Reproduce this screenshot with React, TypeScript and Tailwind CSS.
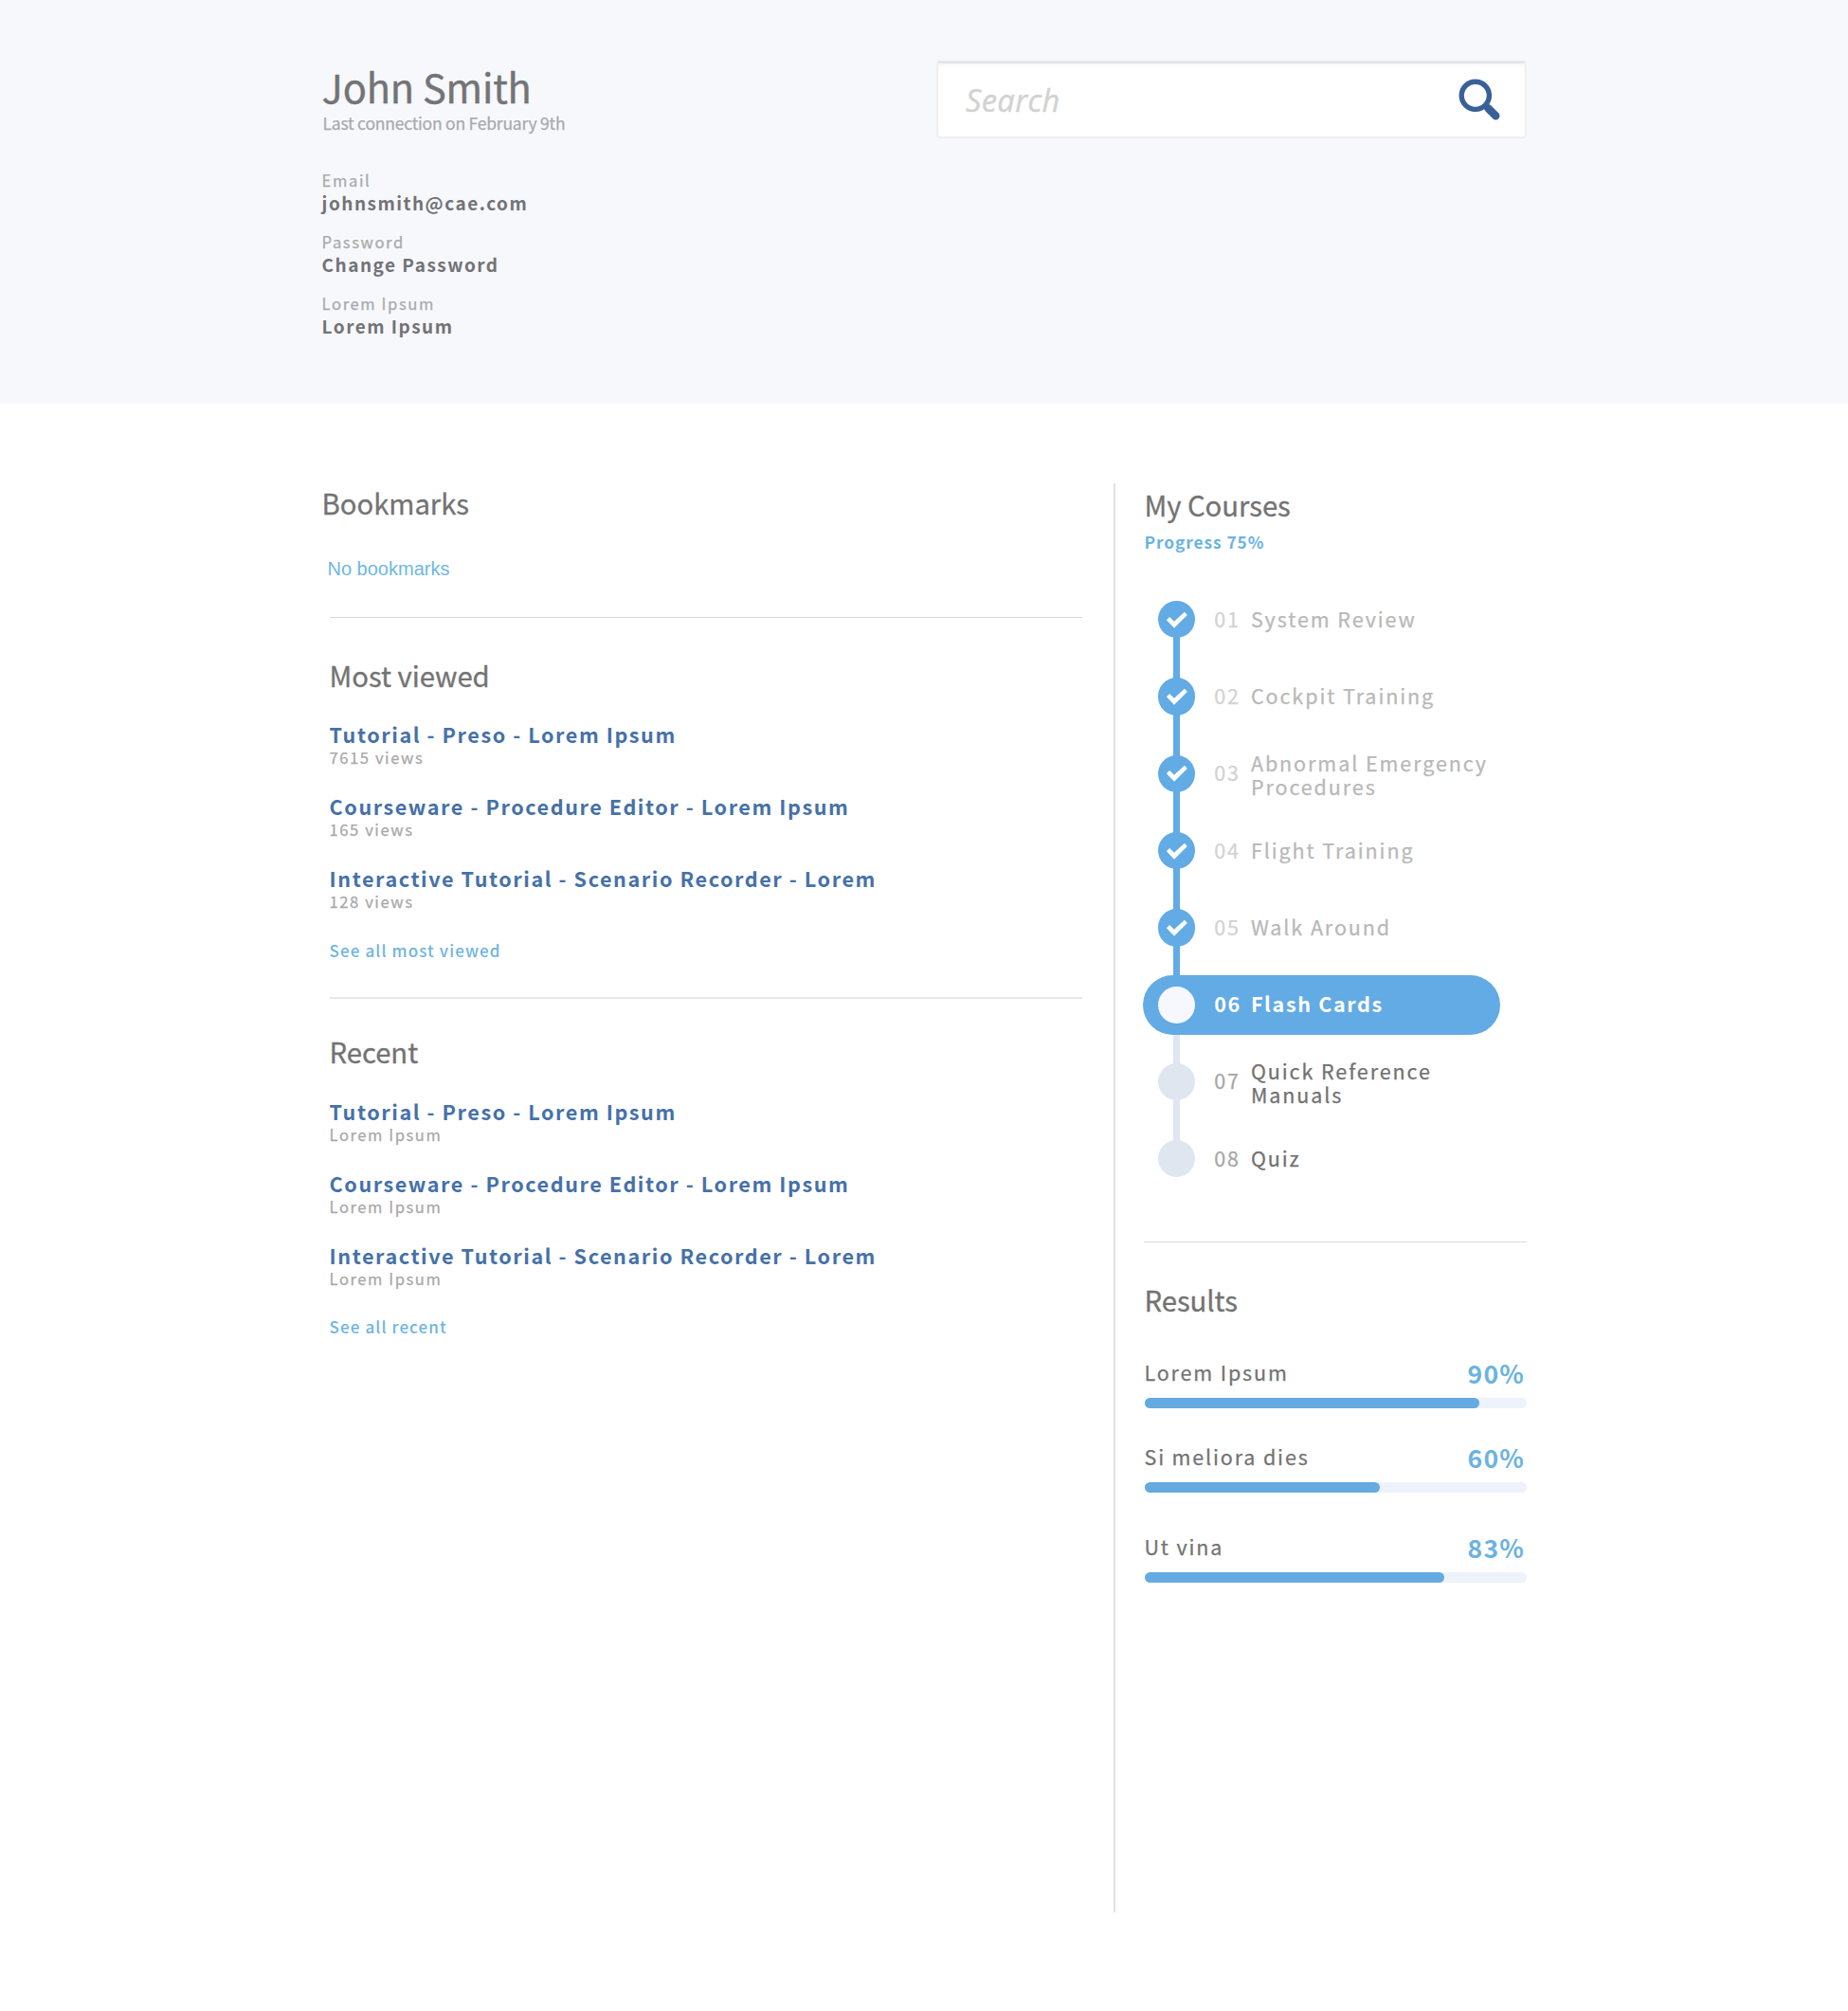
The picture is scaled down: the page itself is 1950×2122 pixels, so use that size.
import React from "react";

type Step = { no: string; lines: string[]; state: "done" | "current" | "todo" };

const details = [
  { label: "Email", value: "johnsmith@cae.com" },
  { label: "Password", value: "Change Password" },
  { label: "Lorem Ipsum", value: "Lorem Ipsum" },
];

const mostViewed = [
  { title: "Tutorial - Preso - Lorem Ipsum", sub: "7615 views" },
  { title: "Courseware - Procedure Editor - Lorem Ipsum", sub: "165 views" },
  { title: "Interactive Tutorial - Scenario Recorder - Lorem", sub: "128 views" },
];

const recent = mostViewed.map((m) => ({ title: m.title, sub: "Lorem Ipsum" }));

const steps: Step[] = [
  { no: "01", lines: ["System Review"], state: "done" },
  { no: "02", lines: ["Cockpit Training"], state: "done" },
  { no: "03", lines: ["Abnormal Emergency", "Procedures"], state: "done" },
  { no: "04", lines: ["Flight Training"], state: "done" },
  { no: "05", lines: ["Walk Around"], state: "done" },
  { no: "06", lines: ["Flash Cards"], state: "current" },
  { no: "07", lines: ["Quick Reference", "Manuals"], state: "todo" },
  { no: "08", lines: ["Quiz"], state: "todo" },
];

const results = [
  { label: "Lorem Ipsum", pct: "90%", fill: 87.6, gap: "mt-[42px]" },
  { label: "Si meliora dies", pct: "60%", fill: 61.5, gap: "mt-[33.5px]" },
  { label: "Ut vina", pct: "83%", fill: 78.3, gap: "mt-[39.5px]" },
];

function Heading({ children }: { children: React.ReactNode }) {
  return (
    <h2 className="text-[29.3px] leading-[36px] tracking-[-0.05px] text-[#737373] [-webkit-text-stroke:0.3px]">
      {children}
    </h2>
  );
}

function LinkList({ items }: { items: { title: string; sub: string }[] }) {
  return (
    <ul className="flex flex-col gap-7">
      {items.map((item) => (
        <li key={item.title} className="whitespace-nowrap">
          <div className="text-[21.6px] leading-[26px] font-bold tracking-[1.57px] text-[#4671a8]">{item.title}</div>
          <div className="text-[16.6px] leading-[22px] tracking-[1.55px] text-[#a8a8a8] [-webkit-text-stroke:0.25px]">
            {item.sub}
          </div>
        </li>
      ))}
    </ul>
  );
}

function SeeAll({ children }: { children: React.ReactNode }) {
  return (
    <a className="block text-[17px] leading-[22px] font-medium tracking-[1.1px] text-[#70b5e0]">{children}</a>
  );
}

function CheckMark() {
  return (
    <svg viewBox="-20 -20 40 40" className="size-10" fill="#fff">
      <polygon points="-11,0.3 -7.7,-3 -2.8,1.8 8.3,-8.4 11.3,-5.1 -2.7,9" />
    </svg>
  );
}

function Marker({ state, first, last }: { state: Step["state"]; first: boolean; last: boolean }) {
  const above = first || state === "current" ? "bg-transparent" : state === "todo" ? "bg-[#dfe6f0]" : "bg-[#62abe5]";
  const below = last || state === "current" ? "bg-transparent" : state === "done" ? "bg-[#62abe5]" : "bg-[#dfe6f0]";
  const dot = state === "done" ? "bg-[#62abe5]" : state === "current" ? "bg-[#f7f8fd]" : "bg-[#dfe6f0]";
  return (
    <div className="flex h-full w-10 shrink-0 flex-col items-center">
      <div className={`-mb-1 w-[7px] flex-1 ${above}`} />
      <div className={`relative flex size-[39.4px] shrink-0 items-center justify-center rounded-full ${dot}`}>
        {state === "done" && <CheckMark />}
      </div>
      <div className={`-mt-1 w-[7px] flex-1 ${below}`} />
    </div>
  );
}

function Timeline() {
  return (
    <ol className="mt-[30.5px] -ml-[0.3px] w-[377px]">
      {steps.map((s, i) => {
        const noColor =
          s.state === "done"
            ? "text-[#d2d2d2] tracking-[1.9px] [-webkit-text-stroke:0.25px]"
            : s.state === "current"
              ? "text-white font-bold tracking-[1.5px]"
              : "text-[#a6a6a6] tracking-[1.9px] [-webkit-text-stroke:0.25px]";
        const textColor =
          s.state === "done"
            ? "text-[#b8b8b8] tracking-[1.92px] [-webkit-text-stroke:0.25px]"
            : s.state === "current"
              ? "text-white font-bold tracking-[1.65px]"
              : "text-[#717171] tracking-[1.92px] [-webkit-text-stroke:0.25px]";
        const row = (
          <>
            <Marker state={s.state} first={i === 0} last={i === steps.length - 1} />
            <span
              className={`ml-[20px] w-[38.7px] shrink-0 text-[21.5px] leading-[25px] ${
                s.state === "current" ? "pb-[4px]" : "pb-[3px]"
              } ${noColor}`}
            >
              {s.no}
            </span>
            <span
              className={`text-[21.5px] leading-[25px] whitespace-nowrap ${textColor} ${
                s.lines.length > 1 ? "pt-[1px]" : s.state === "current" ? "pb-[4px]" : "pb-[3px]"
              }`}
            >
              {s.lines.map((l) => (
                <span key={l} className="block">
                  {l}
                </span>
              ))}
            </span>
          </>
        );
        if (s.state === "current") {
          return (
            <li key={s.no} className="flex h-[81.3px] flex-col items-stretch">
              <div className="ml-[31.5px] h-[10px] w-[7px] bg-[#62abe5]" />
              <div className="flex h-[62.3px] items-center rounded-full bg-[#62abe5] pl-[15px]">{row}</div>
              <div className="ml-[31.5px] w-[7px] flex-1 bg-[#dfe6f0]" />
            </li>
          );
        }
        return (
          <li key={s.no} className="flex h-[81.3px] items-center pl-[15px]">
            {row}
          </li>
        );
      })}
    </ol>
  );
}

export default function App() {
  return (
    <div className="min-h-[2122px] bg-white font-['Noto_Sans_CJK_SC','Noto_Sans',sans-serif]">
      <header className="h-[426px] bg-[#f7f8fc]">
        <div className="mx-auto flex w-[1272px] justify-between">
          <div className="pt-[67px] pl-[0.6px] whitespace-nowrap">
            <h1 className="text-[41.6px] leading-[48px] tracking-[-0.2px] text-[#737476] [-webkit-text-stroke:0.4px]">
              John Smith
            </h1>
            <p className="mt-[2.5px] pl-px text-[17.5px] leading-[24px] tracking-[-0.23px] text-[#a9a9ab] [-webkit-text-stroke:0.25px]">
              Last connection on February 9th
            </p>
            <dl className="mt-[36px] flex flex-col gap-[17px]">
              {details.map((d) => (
                <div key={d.label}>
                  <dt className="text-[16.6px] leading-[24px] tracking-[1.6px] text-[#a9a9ab] [-webkit-text-stroke:0.25px]">
                    {d.label}
                  </dt>
                  <dd className="text-[19px] leading-[24px] font-bold tracking-[1.48px] text-[#727376]">{d.value}</dd>
                </div>
              ))}
            </dl>
          </div>
          <div className="mt-[64px] flex h-[82px] w-[623px] items-center justify-between rounded-[4px] border-2 border-t-[3px] border-[#f0f0f3] border-t-[#e6e6ea] bg-white pr-[26px] pl-[29px] shadow-[inset_0_2px_3px_rgba(0,0,0,0.04)]">
            <span className="font-['Open_Sans','Noto_Sans',sans-serif] text-[32.5px] leading-[44px] tracking-[0.4px] text-[#d2d2d2] italic [-webkit-text-stroke:0.4px]">
              Search
            </span>
            <svg viewBox="0 0 44 44" className="-mt-[2px] size-11" fill="none" stroke="#3a6098">
              <circle cx="17.8" cy="17.8" r="14.6" strokeWidth="5.4" />
              <path d="M27.5 27.5 L31 31" strokeWidth="7" />
              <path d="M31.5 31.5 L39.3 39.3" strokeWidth="8.4" strokeLinecap="round" />
            </svg>
          </div>
        </div>
      </header>

      <main className="mx-auto flex w-[1272px]">
        <section className="w-[803px] pt-[86px]">
          <div className="pl-[0.6px]">
            <Heading>Bookmarks</Heading>
          </div>
          <p className="mt-[39.5px] pl-[6.5px] font-['Liberation_Sans',Arial,sans-serif] text-[20px] leading-[24px] text-[#6fb8e2]">
            No bookmarks
          </p>
          <div className="pl-[8.6px]">
            <hr className="mt-[39.5px] h-px border-0 bg-[#d6d9e4]" />
            <div className="mt-[42px]">
              <Heading>Most viewed</Heading>
            </div>
            <div className="mt-[32px]">
              <LinkList items={mostViewed} />
            </div>
            <div className="mt-[29.5px]">
              <SeeAll>See all most viewed</SeeAll>
            </div>
            <hr className="mt-[38.5px] h-[2px] border-0 bg-[#e5e6ea]" />
            <div className="mt-[37px]">
              <Heading>Recent</Heading>
            </div>
            <div className="mt-[32.5px]">
              <LinkList items={recent} />
            </div>
            <div className="mt-[29px]">
              <SeeAll>See all recent</SeeAll>
            </div>
          </div>
        </section>

        <aside className="mt-[84px] ml-[33px] h-[1508px] w-[436px] border-l-2 border-[#e1e1ea] pt-[4px] pl-[29.5px]">
          <div className="pl-px">
            <Heading>My Courses</Heading>
            <p className="mt-[10.5px] text-[17.3px] leading-[22px] font-bold tracking-[0.95px] text-[#6ab3e0]">
              Progress 75%
            </p>
          </div>
          <Timeline />
          <hr className="mt-[46.5px] h-px border-0 bg-[#d9dbe4]" />
          <div className="mt-[42px] pl-px">
            <Heading>Results</Heading>
          </div>
          <div className="pl-[1.5px]">
            {results.map((r) => (
              <div key={r.label} className={r.gap}>
                <div className="flex h-[34px] items-center justify-between pr-[2px]">
                  <span className="-ml-[0.5px] text-[21.5px] leading-[34px] tracking-[1.85px] text-[#737373] [-webkit-text-stroke:0.25px]">
                    {r.label}
                  </span>
                  <span className="pt-[3px] text-[26.5px] leading-[34px] font-bold tracking-[1.2px] text-[#6bb3e0]">
                    {r.pct}
                  </span>
                </div>
                <div className="mt-[10.5px] h-[11px] rounded-full bg-[#edf2fb]">
                  <div className="h-full rounded-full bg-[#65aae0]" style={{ width: `${r.fill}%` }} />
                </div>
              </div>
            ))}
          </div>
        </aside>
      </main>
    </div>
  );
}
